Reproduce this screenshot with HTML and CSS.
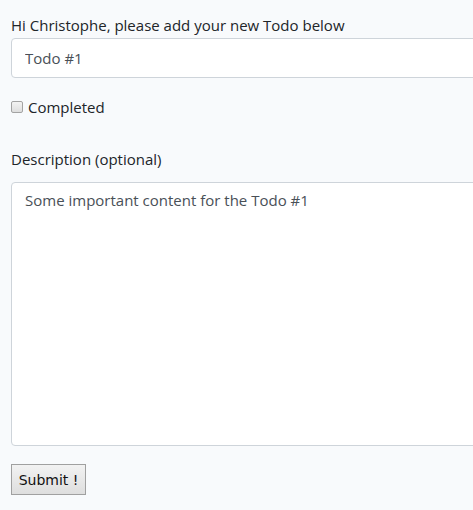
FILE: index.html
```html
<!DOCTYPE html>
<html>
<head>
<meta charset="utf-8">
<link rel="stylesheet" href="styles.css">
</head>
<body>
<form class="form">
  <label class="label" for="title">Hi Christophe, please add your new Todo below</label>
  <input class="input" id="title" type="text" value="Todo #1">
  <div class="check-row">
    <input class="check" id="done" type="checkbox">
    <label for="done" class="check-label">Completed</label>
  </div>
  <label class="label desc-label" for="desc">Description (optional)</label>
  <textarea class="textarea" id="desc">Some important content for the Todo #1</textarea>
  <div class="actions">
    <button class="submit" type="button">Submit !</button>
  </div>
</form>
</body>
</html>
```
FILE: styles.css
```css
html, body {
  margin: 0;
  background: #f8fafc;
  overflow: hidden;
}
body {
  padding: 0 0 0 11px;
  font-family: "Open Sans", sans-serif;
  font-size: 15px;
  color: #212529;
}
.form {
  width: 600px;
  display: flex;
  flex-direction: column;
}
.label {
  display: block;
  line-height: 22px;
  margin-top: 14px;
  margin-bottom: 2px;
}
.input {
  box-sizing: border-box;
  height: 40px;
  border: 1px solid #ced4da;
  border-radius: 4px;
  background: #fff;
  padding: 0 13px;
  font: inherit;
  color: #495057;
  outline: none;
}
.check-row {
  display: flex;
  align-items: center;
  margin-top: 18px;
  height: 22px;
}
.check {
  -webkit-appearance: none;
  appearance: none;
  box-sizing: border-box;
  margin: 0 5px 0 0;
  width: 12px;
  height: 12px;
  border: 1px solid #a3a3a3;
  border-radius: 2px;
  background: linear-gradient(#f3f3f3, #dedede);
}
.check-label {
  line-height: 22px;
}
.desc-label {
  margin-top: 30px;
  margin-bottom: 12px;
}
.textarea {
  box-sizing: border-box;
  height: 264px;
  border: 1px solid #ced4da;
  border-radius: 4px;
  background: #fff;
  padding: 6px 13px;
  font: inherit;
  line-height: 22px;
  color: #495057;
  resize: none;
  outline: none;
}
.actions {
  margin-top: 18px;
}
.submit {
  box-sizing: border-box;
  height: 31px;
  width: 75px;
  padding: 0;
  border: 1px solid #a0a0a0;
  border-radius: 0;
  background: linear-gradient(#f2f2f2, #dedede);
  font-family: "DejaVu Sans", sans-serif;
  font-size: 14px;
  color: #111;
}
```
